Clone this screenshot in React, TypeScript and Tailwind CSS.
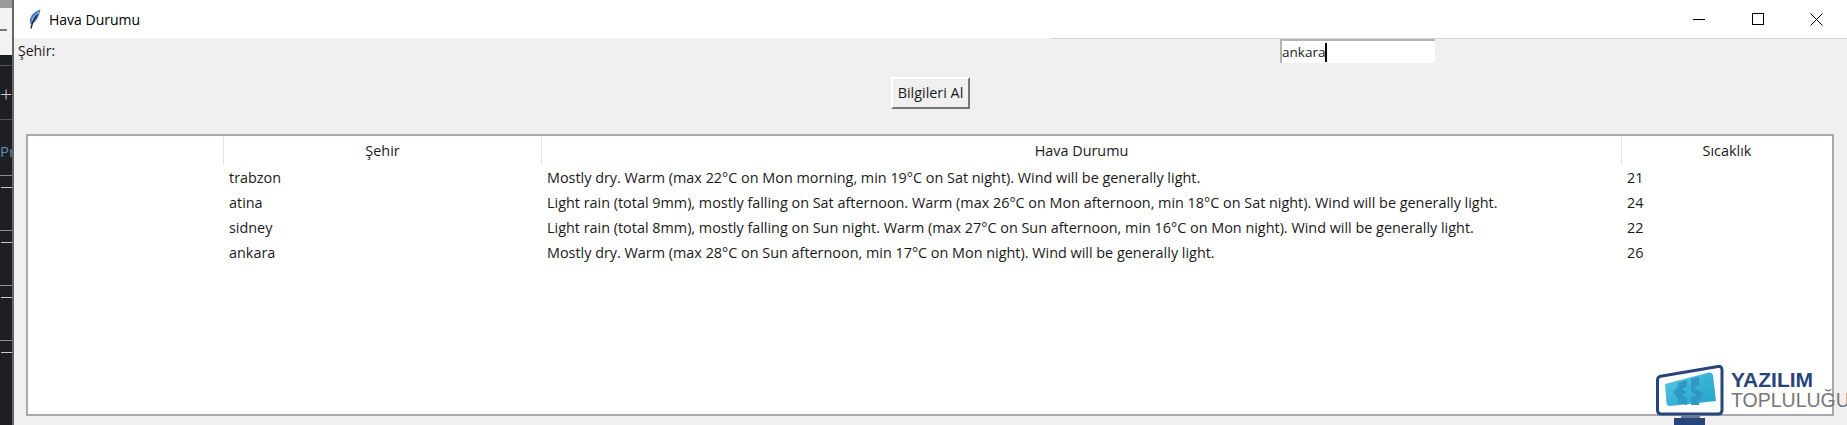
const rows = [
  ["trabzon", "Mostly dry. Warm (max 22°C on Mon morning, min 19°C on Sat night). Wind will be generally light.", "21"],
  ["atina", "Light rain (total 9mm), mostly falling on Sat afternoon. Warm (max 26°C on Mon afternoon, min 18°C on Sat night). Wind will be generally light.", "24"],
  ["sidney", "Light rain (total 8mm), mostly falling on Sun night. Warm (max 27°C on Sun afternoon, min 16°C on Mon night). Wind will be generally light.", "22"],
  ["ankara", "Mostly dry. Warm (max 28°C on Sun afternoon, min 17°C on Mon night). Wind will be generally light.", "26"],
];

const Feather = () => (
  <svg width="14" height="20" viewBox="0 0 14 20">
    <path d="M12.500 0.500C8 1.500 3.500 5 2 10C1.500 12 2 14 3 15.500C7 14 11 9 12.500 0.500Z" fill="#4a7cc4" />
    <path d="M11 3C8 4.500 5 8 4 12" stroke="#a9c6ee" strokeWidth="1" fill="none" />
    <path d="M9 6C6 10 4 14 3 19.500" stroke="#1f2c3e" strokeWidth="1.400" fill="none" />
  </svg>
);

const Logo = () => (
  <svg width="68" height="60" viewBox="0 0 68 60">
    <defs>
      <linearGradient id="panel" x1="0" y1="0" x2="1" y2="1">
        <stop offset="0" stopColor="#62cbe3" />
        <stop offset="0.500" stopColor="#37b3d6" />
        <stop offset="1" stopColor="#27a3c4" />
      </linearGradient>
    </defs>
    <path d="M6 11L62 1.500Q66 1 66 5V45Q66 49 62 49H5Q1.500 49 1.500 45V15Q1.500 11.500 6 11Z" fill="#fff" stroke="#27457a" strokeWidth="3" />
    <path d="M9 19L53 7.500Q56 7 57 10L60 36L14 41Q11 41 10.500 38Z" fill="url(#panel)" />
    <path d="M22 18L31 15V22L26 24L31 27L26 30L31 33V40L22 38V33L17 27L22 22Z" fill="#3097c6" />
    <path d="M35 14L43 12V20L38 23L48 29L43 36V40H35V33L40 30L35 26Z" fill="#3097c6" />
    <path d="M25 50H44V53H25Z" fill="#6b7b92" />
    <path d="M18 53H49V60H18Z" fill="#27457a" />
  </svg>
);

const StripRow = () => (
  <div className="flex h-[55px] flex-col pt-[10px]">
    <div className="h-px bg-[#8f8f8f]"></div>
    <div className="ml-[1px] mt-[11px] h-px w-[11px] bg-[#c8c8c8]"></div>
  </div>
);

export default function App() {
  return (
    <div className="relative flex h-[425px] w-[1847px] overflow-hidden bg-[#f0f0f0] text-[14.4px] text-[#1a1a1a] [font-family:'Open_Sans',sans-serif]">
      <div className="flex w-[12px] shrink-0 flex-col bg-[#1e1f22] text-[#ccc]">
        <div className="h-[8px] bg-[#9a9a9a]"></div>
        <div className="flex h-[47px] items-center bg-[#f3f3f3] pb-[3px]"><div className="h-[2px] w-[7px] bg-[#777]"></div></div>
        <div className="mt-[10px] h-px bg-[#555]"></div>
        <div className="flex h-[53px] items-center justify-center text-[22px] font-light leading-none">+</div>
        <div className="h-px bg-[#555]"></div>
        <div className="h-[45px] overflow-hidden pt-[24px] text-[15px] leading-none text-[#6b86b5]">Pr</div>
        <StripRow />
        <StripRow />
        <StripRow />
        <StripRow />
      </div>
      <div className="w-[2px] shrink-0 bg-[#666]"></div>
      <div className="flex min-w-0 flex-1 flex-col">
        <div className="flex h-[38px] items-center bg-white pl-[14px] text-[14px] text-black">
          <Feather />
          <span className="ml-[7px]">Hava Durumu</span>
          <div className="ml-auto mr-[1.500px] flex items-center">
            <div className="flex h-[38px] w-[58.500px] items-center justify-center"><div className="h-px w-[12px] bg-black"></div></div>
            <div className="flex h-[38px] w-[58.500px] items-center justify-center"><div className="h-[12px] w-[12px] border border-black"></div></div>
            <div className="flex h-[38px] w-[58.500px] items-center justify-center">
              <svg width="13" height="13" viewBox="0 0 13 13"><path d="M0.500 0.500L12.500 12.500M12.500 0.500L0.500 12.500" stroke="#000" /></svg>
            </div>
          </div>
        </div>
        <div className="ml-[1037px] h-px bg-[#d4d4d4]"></div>
        <div className="flex h-[24px] items-start">
          <span className="ml-[4px] mt-[1px] text-[14px]">Şehir:</span>
          <div className="ml-[1225px] flex h-[24px] w-[155px] items-center border-l-2 border-t-2 border-[#b4b4b4] bg-white text-[13.500px]">
            <span>ankara</span>
            <div className="h-[19px] w-[2px] bg-black"></div>
          </div>
        </div>
        <div className="mt-[14px] flex justify-center">
          <button className="h-[32px] w-[79px] border-2 border-b-[#777] border-l-white border-r-[#777] border-t-white bg-[#f0f0f0] text-[14.4px]">Bilgileri Al</button>
        </div>
        <div className="ml-[12px] mr-[13px] mt-[25px] flex h-[282px] flex-col border-2 border-[#a8aab0] bg-white">
          <div className="flex h-[29px]">
            <div className="w-[195px]"></div>
            <div className="flex w-[318px] items-center justify-center border-l border-[#e5e5e5]">Şehir</div>
            <div className="flex w-[1080px] items-center justify-center border-l border-[#e5e5e5]">Hava Durumu</div>
            <div className="flex flex-1 items-center justify-center border-l border-[#e5e5e5]">Sıcaklık</div>
          </div>
          {rows.map((r) => (
            <div key={r[0]} className="flex h-[25.100px] items-center">
              <div className="w-[195px]"></div>
              <div className="w-[318px] pl-[6px]">{r[0]}</div>
              <div className="w-[1080px] whitespace-nowrap pl-[6px]">{r[1]}</div>
              <div className="flex-1 pl-[6px]">{r[2]}</div>
            </div>
          ))}
        </div>
      </div>
      <div className="absolute left-[1656px] top-[365px] flex items-start">
        <Logo />
        <div className="ml-[7px] mt-[5px] flex flex-col [font-family:'Liberation_Sans',sans-serif]">
          <span className="text-[21px] font-bold leading-[20px] text-[#27457a]">YAZILIM</span>
          <span className="text-[19.500px] leading-[20px] text-[#777]">TOPLULUĞU</span>
        </div>
      </div>
    </div>
  );
}
